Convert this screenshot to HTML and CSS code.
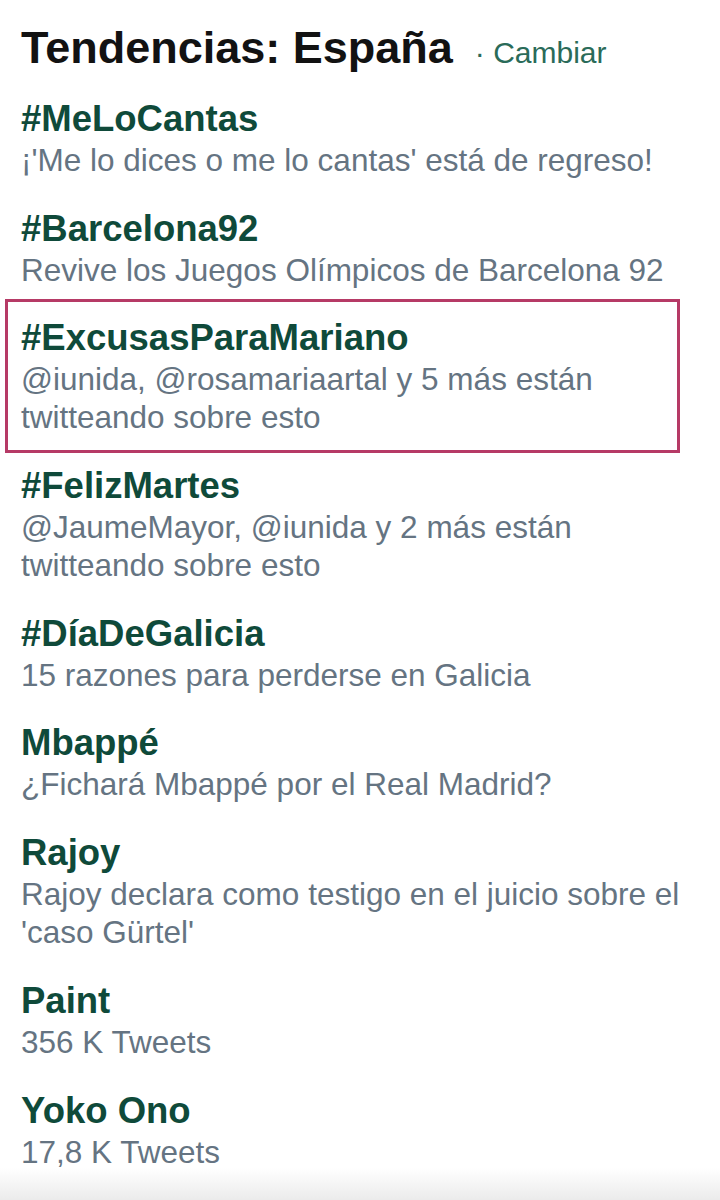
FILE: index.html
```html
<!DOCTYPE html>
<html lang="es">
<head>
<meta charset="utf-8">
<title>Tendencias: España</title>
<link rel="stylesheet" href="styles.css">
</head>
<body>
<div class="panel">
  <h1 class="title">Tendencias: España<span class="change">· Cambiar</span></h1>
  <ul class="trends">
    <li class="trend">
      <div class="name">#MeLoCantas</div>
      <div class="desc">¡'Me lo dices o me lo cantas' está de regreso!</div>
    </li>
    <li class="trend">
      <div class="name">#Barcelona92</div>
      <div class="desc">Revive los Juegos Olímpicos de Barcelona 92</div>
    </li>
    <li class="trend trend-highlight">
      <div class="name">#ExcusasParaMariano</div>
      <div class="desc">@iunida, @rosamariaartal y 5 más están twitteando sobre esto</div>
    </li>
    <li class="trend">
      <div class="name">#FelizMartes</div>
      <div class="desc">@JaumeMayor, @iunida y 2 más están twitteando sobre esto</div>
    </li>
    <li class="trend">
      <div class="name">#DíaDeGalicia</div>
      <div class="desc">15 razones para perderse en Galicia</div>
    </li>
    <li class="trend">
      <div class="name">Mbappé</div>
      <div class="desc">¿Fichará Mbappé por el Real Madrid?</div>
    </li>
    <li class="trend">
      <div class="name">Rajoy</div>
      <div class="desc">Rajoy declara como testigo en el juicio sobre el 'caso Gürtel'</div>
    </li>
    <li class="trend">
      <div class="name">Paint</div>
      <div class="desc">356 K Tweets</div>
    </li>
    <li class="trend">
      <div class="name">Yoko Ono</div>
      <div class="desc">17,8 K Tweets</div>
    </li>
  </ul>
</div>
</body>
</html>
```
FILE: styles.css
```css
html {
  height: 1200px;
  background: linear-gradient(to bottom, #ffffff 0, #ffffff 1168px, #ebebeb 1200px);
}
body {
  margin: 0;
  font-family: "Liberation Sans", Arial, Helvetica, sans-serif;
}
.panel {
  padding: 20px 30px 0 7px;
}
.title {
  margin: 0 0 2px;
  padding-left: 14px;
  font-size: 45px;
  line-height: 56px;
  font-weight: bold;
  color: #121212;
  white-space: nowrap;
}
.change {
  margin-left: 22px;
  font-size: 30px;
  font-weight: normal;
  color: #2a6b59;
}
.trends {
  list-style: none;
  margin: 0;
  padding: 0;
}
.trend {
  padding: 14px 0 13.7px 14px;
}
.trend-highlight {
  margin: -3px 10px -3px -2px;
  padding: 14px 0 13.7px 13px;
  border: 3px solid #b63a66;
}
.name {
  font-size: 36.5px;
  line-height: 44px;
  font-weight: bold;
  color: #0f4a3a;
}
.desc {
  font-size: 31.5px;
  line-height: 38px;
  color: #657482;
}
```
